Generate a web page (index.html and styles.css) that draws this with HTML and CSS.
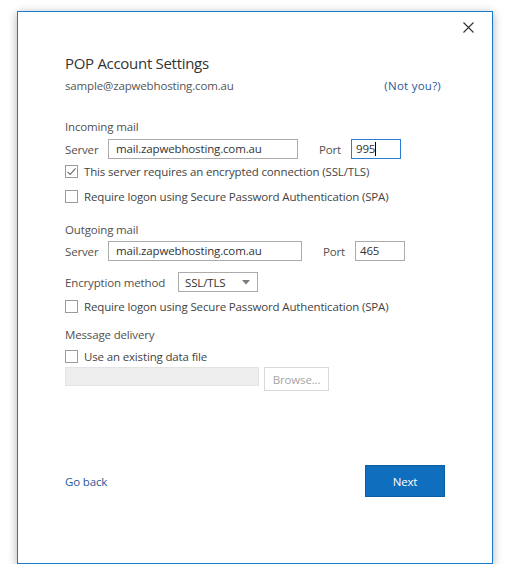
FILE: index.html
```html
<!DOCTYPE html>
<html>
<head>
<meta charset="utf-8">
<link rel="stylesheet" href="styles.css">
</head>
<body>
<div class="window">
  <div class="titlebar">
    <svg class="close" width="11" height="11" viewBox="0 0 11 11"><path d="M0.5 0.5 L10.5 10.5 M10.5 0.5 L0.5 10.5" stroke="#333" stroke-width="1.1" fill="none"/></svg>
  </div>
  <div class="content">
    <div class="title">POP Account Settings</div>
    <div class="account">
      <span class="email">sample@zapwebhosting.com.au</span>
      <a class="link">(Not you?)</a>
    </div>

    <div class="section-label incoming">Incoming mail</div>
    <div class="field-row r1">
      <span class="lbl server-lbl">Server</span>
      <div class="input server-in w190">mail.zapwebhosting.com.au</div>
      <span class="lbl port-lbl">Port</span>
      <div class="input port-in focused">995<span class="caret"></span></div>
    </div>
    <div class="check-row c1">
      <span class="box checked"><svg width="11" height="11" viewBox="0 0 11 11"><path d="M1.5 5.8 L4.2 8.4 L9.6 2.4" stroke="#6b6b6b" stroke-width="1.1" fill="none"/></svg></span>
      <span>This server requires an encrypted connection (SSL/TLS)</span>
    </div>
    <div class="check-row c2">
      <span class="box"></span>
      <span>Require logon using Secure Password Authentication (SPA)</span>
    </div>

    <div class="section-label outgoing">Outgoing mail</div>
    <div class="field-row r2">
      <span class="lbl server-lbl">Server</span>
      <div class="input server-in w194">mail.zapwebhosting.com.au</div>
      <span class="lbl port-lbl">Port</span>
      <div class="input port-in">465</div>
    </div>
    <div class="field-row r3">
      <span class="lbl enc-lbl">Encryption method</span>
      <div class="select"><span>SSL/TLS</span><svg width="8" height="5" viewBox="0 0 8 5"><path d="M0 0 H8 L4 4.5 Z" fill="#7a7a7a"/></svg></div>
    </div>
    <div class="check-row c3">
      <span class="box"></span>
      <span>Require logon using Secure Password Authentication (SPA)</span>
    </div>

    <div class="section-label delivery">Message delivery</div>
    <div class="check-row c4">
      <span class="box"></span>
      <span>Use an existing data file</span>
    </div>
    <div class="file-row">
      <div class="input disabled"></div>
      <div class="btn-disabled">Browse...</div>
    </div>

    <div class="footer">
      <a class="link back">Go back</a>
      <div class="btn-primary">Next</div>
    </div>
  </div>
</div>
</body>
</html>
```

FILE: styles.css
```css
html, body {
  margin: 0;
  padding: 0;
  background: #ffffff;
}
body {
  font-family: "Open Sans", "Noto Sans", "DejaVu Sans", sans-serif;
  font-size: 11.5px;
  letter-spacing: -0.15px;
  color: #444444;
}
.window {
  box-sizing: border-box;
  margin: 11px 0 0 17px;
  width: 476px;
  height: 553px;
  border: 1px solid #1979ca;
  background: #ffffff;
  box-shadow: 0 2px 9px rgba(0, 0, 0, 0.32);
}
.titlebar {
  display: flex;
  justify-content: flex-end;
  height: 41px;
  padding: 10px 18px 0 0;
  box-sizing: border-box;
}
.close {
  display: block;
}
.content {
  padding: 0 47px;
}
.title {
  font-size: 15px;
  letter-spacing: -0.3px;
  line-height: 20px;
  color: #333333;
  height: 20px;
}
.account {
  display: flex;
  justify-content: space-between;
  align-items: center;
  height: 18px;
  margin-top: 3px;
  color: #555555;
}
.link {
  color: #2b5797;
  cursor: pointer;
}
.account .link {
  margin-right: 4px;
  letter-spacing: 0.25px;
}
.section-label {
  height: 18px;
  line-height: 18px;
  color: #505050;
}
.incoming { margin-top: 24px; }
.outgoing { margin-top: 16px; }
.delivery { margin-top: 11px; }

.field-row {
  display: flex;
  align-items: center;
  height: 20px;
}
.r1 { margin-top: 3px; }
.r2 { margin-top: 2px; }
.r3 { margin-top: 11px; }
.lbl {
  color: #505050;
  flex: none;
}
.server-lbl { width: 43px; }
.enc-lbl { width: 113px; }
.input {
  box-sizing: border-box;
  height: 20px;
  line-height: 18px;
  border: 1px solid #ababab;
  padding: 0 7px;
  color: #333333;
  flex: none;
  background: #fff;
}
.w190 { width: 190px; }
.w194 { width: 194px; }
.port-lbl {
  margin-left: 21px;
  width: 32px;
}
.port-in {
  width: 50px;
  padding-left: 4px;
}
.focused {
  border-color: #2b7cd3;
}
.caret {
  display: inline-block;
  width: 1px;
  height: 14px;
  background: #000;
  vertical-align: -3px;
}
.select {
  box-sizing: border-box;
  width: 80px;
  height: 20px;
  border: 1px solid #ababab;
  display: flex;
  align-items: center;
  justify-content: space-between;
  padding: 0 7px 0 6px;
  color: #333333;
}
.check-row {
  display: flex;
  align-items: center;
  height: 18px;
  color: #444444;
}
.c1 { margin-top: 3px; }
.c2 { margin-top: 7px; }
.c3 { margin-top: 5px; }
.c4 { margin-top: 3px; }
.box {
  box-sizing: border-box;
  width: 13px;
  height: 13px;
  border: 1px solid #9a9a9a;
  margin-right: 6px;
  display: flex;
  align-items: center;
  justify-content: center;
  flex: none;
}
.box svg { display: block; }
.file-row {
  display: flex;
  align-items: flex-start;
  margin-top: 2px;
}
.disabled {
  width: 194px;
  height: 19px;
  background: #eeeeee;
  border-color: #e3e3e3;
}
.btn-disabled {
  box-sizing: border-box;
  margin-left: 5px;
  width: 65px;
  height: 24px;
  border: 1px solid #d9d9d9;
  color: #a6a6a6;
  display: flex;
  align-items: center;
  justify-content: center;
  background: #ffffff;
}
.footer {
  display: flex;
  justify-content: space-between;
  align-items: center;
  margin-top: 74px;
}
.btn-primary {
  box-sizing: border-box;
  width: 80px;
  height: 32px;
  background: #106ebe;
  border: 1px solid #0d5ea3;
  color: #ffffff;
  display: flex;
  align-items: center;
  justify-content: center;
}
```
